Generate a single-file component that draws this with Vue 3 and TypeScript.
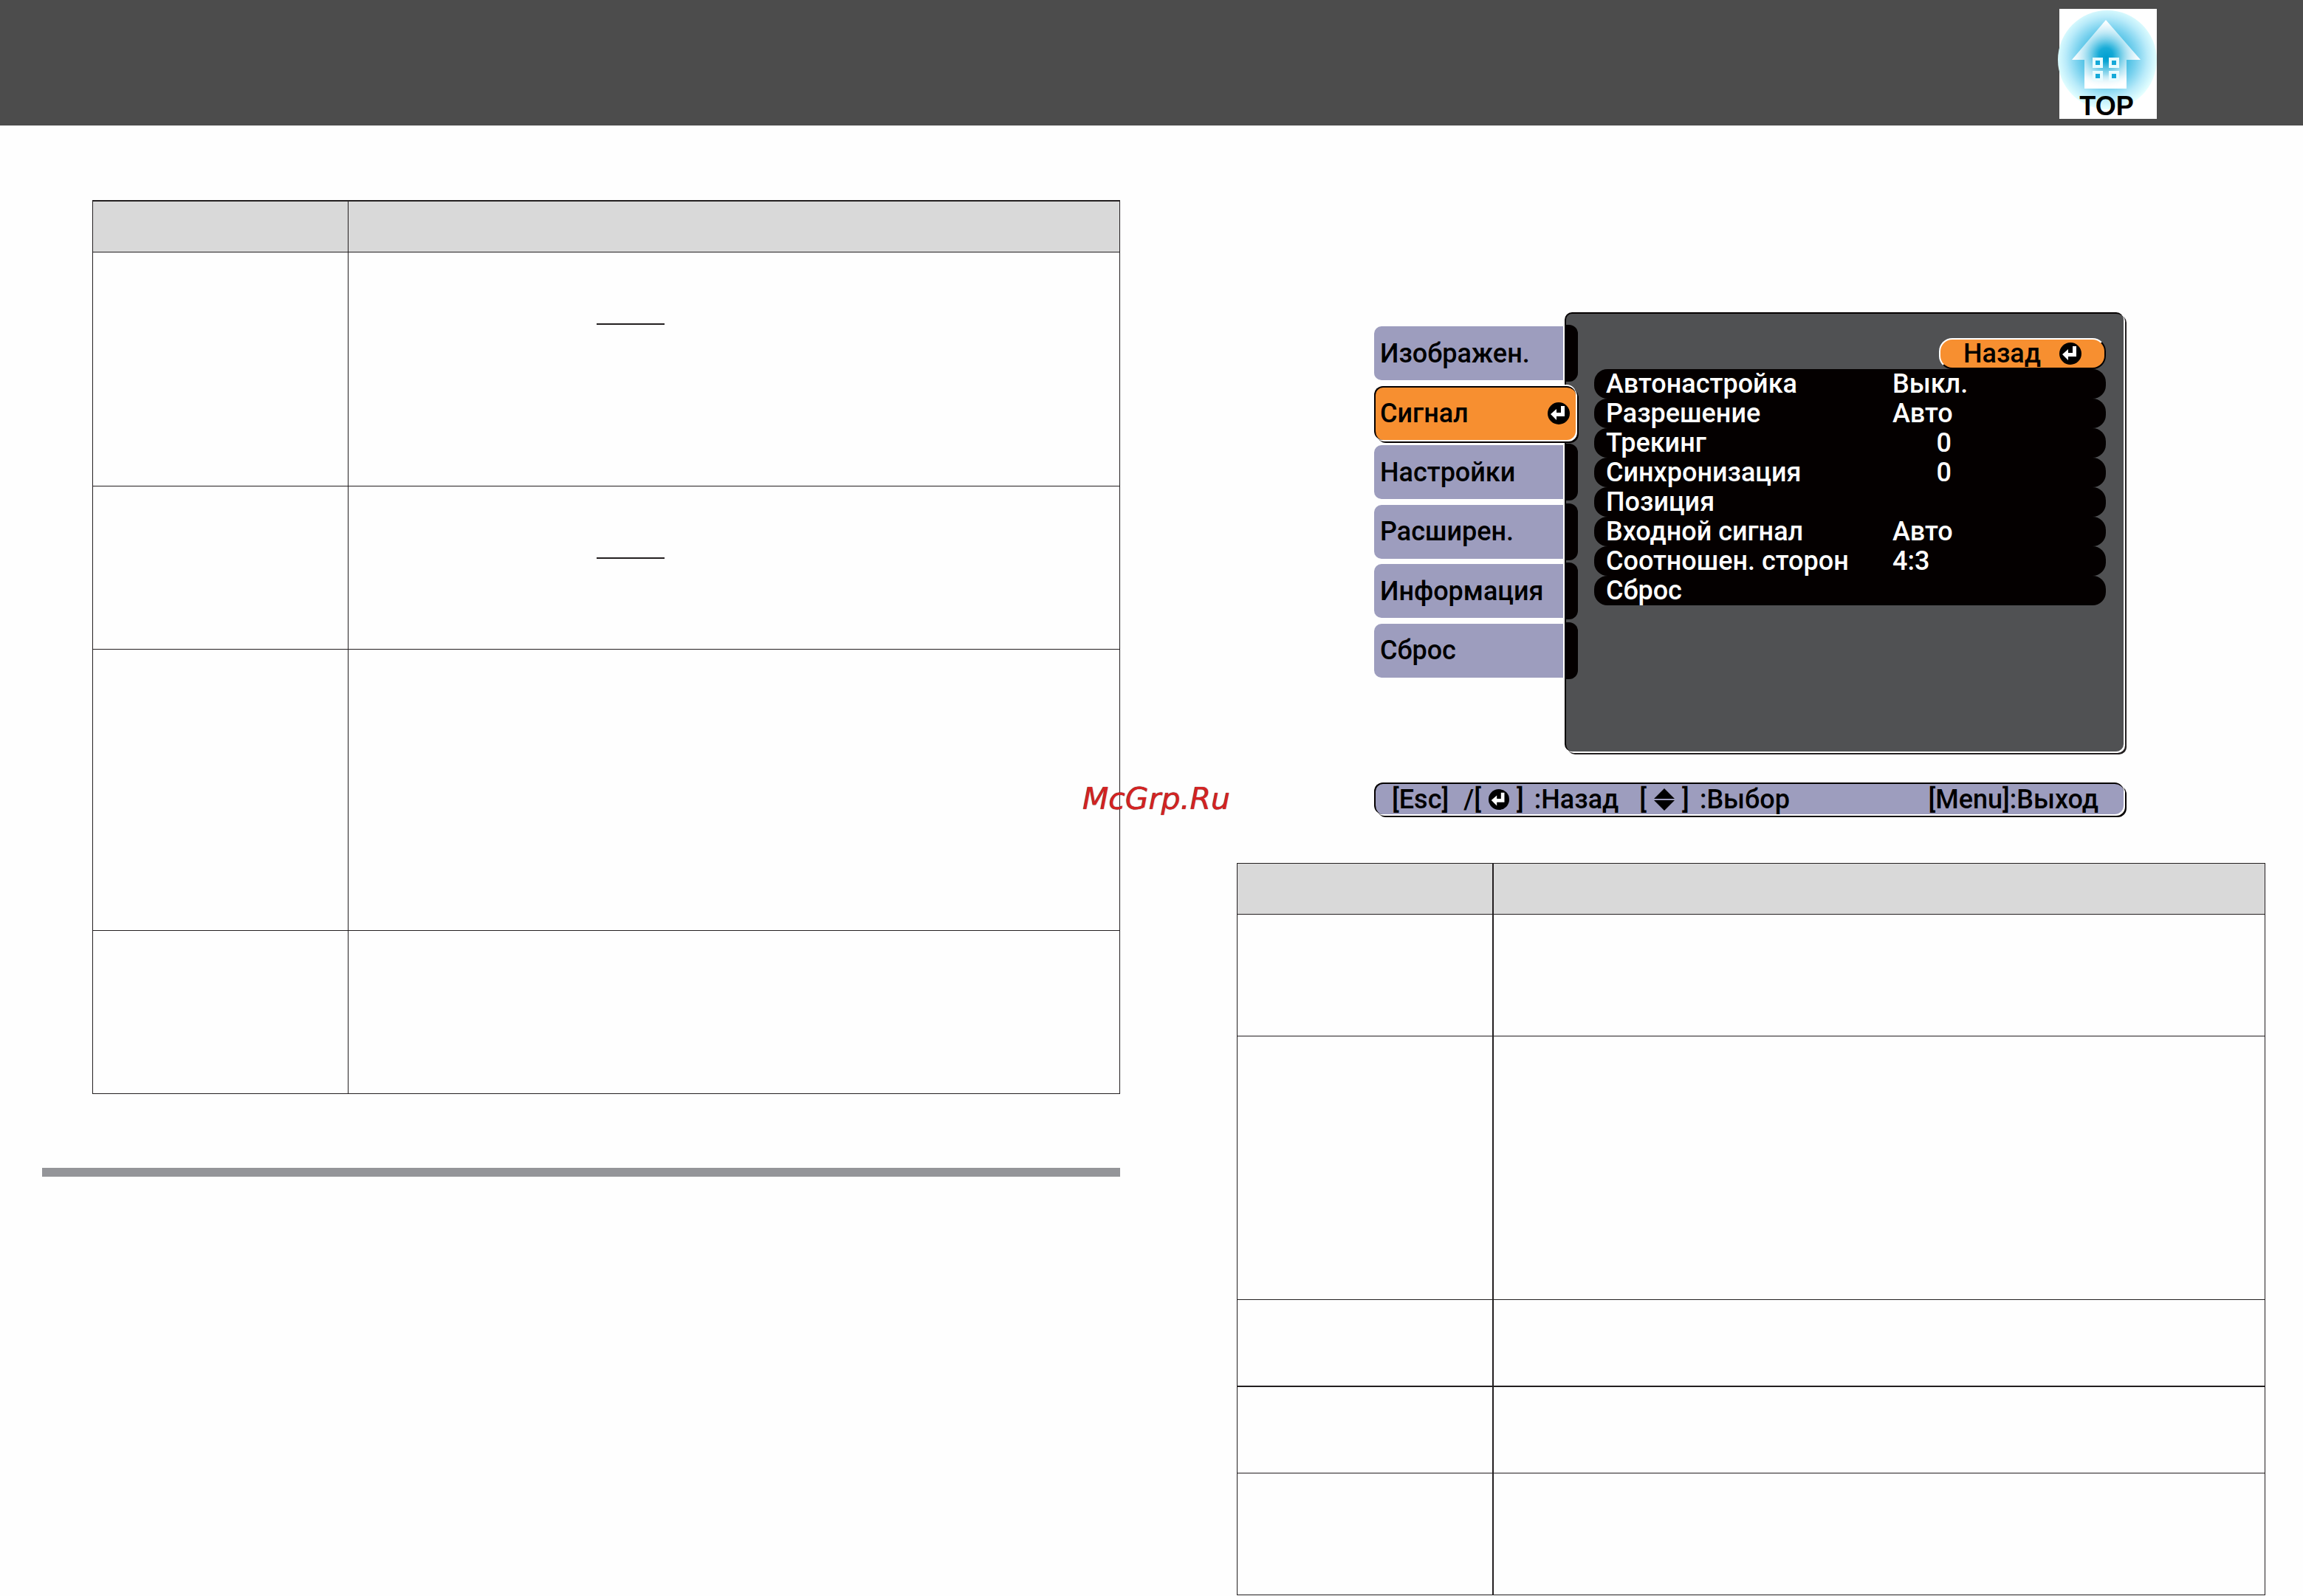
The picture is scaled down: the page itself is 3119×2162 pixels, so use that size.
<script setup lang="ts">
import { ref } from 'vue'

interface Row {
  height: number
  blank?: boolean
  strong?: boolean
}

interface MenuItem {
  label: string
  value?: string
  numeric?: boolean
}

const imageRows: Row[] = [
  { height: 317, blank: true },
  { height: 221, blank: true },
  { height: 381 },
  { height: 221 },
]

const signalRows: Row[] = [
  { height: 165 },
  { height: 357 },
  { height: 118, strong: true },
  { height: 117 },
  { height: 165 },
]

const tabs: string[] = ['Изображен.', 'Сигнал', 'Настройки', 'Расширен.', 'Информация', 'Сброс']
const activeTab = ref('Сигнал')

const items: MenuItem[] = [
  { label: 'Автонастройка', value: 'Выкл.' },
  { label: 'Разрешение', value: 'Авто' },
  { label: 'Трекинг', value: '0', numeric: true },
  { label: 'Синхронизация', value: '0', numeric: true },
  { label: 'Позиция' },
  { label: 'Входной сигнал', value: 'Авто' },
  { label: 'Соотношен. сторон', value: '4:3' },
  { label: 'Сброс' },
]
</script>

<template>
  <div class="page">
    <header class="banner">
      <a class="top-link" href="#">
        <svg viewBox="0 0 136 149" width="136" height="149">
          <defs>
            <radialGradient id="disc" gradientUnits="userSpaceOnUse" cx="66" cy="66" r="69">
              <stop offset="0" stop-color="#009fd0" />
              <stop offset="0.25" stop-color="#22b0da" />
              <stop offset="0.58" stop-color="#78d1ee" />
              <stop offset="0.8" stop-color="#b9ebfa" />
              <stop offset="1" stop-color="#e4ffff" />
            </radialGradient>
            <radialGradient id="house" gradientUnits="userSpaceOnUse" cx="65" cy="62" r="46">
              <stop offset="0.2" stop-color="#fff" stop-opacity="0" />
              <stop offset="0.65" stop-color="#fff" stop-opacity="0.6" />
              <stop offset="1" stop-color="#fff" />
            </radialGradient>
            <linearGradient id="foot" x1="0" y1="0" x2="0" y2="1">
              <stop offset="0.5" stop-color="#fff" stop-opacity="0" />
              <stop offset="1" stop-color="#fff" stop-opacity="0.9" />
            </linearGradient>
          </defs>
          <rect x="2" y="0" width="132" height="149" fill="#fff" />
          <circle cx="67" cy="69" r="67" fill="url(#disc)" />
          <path d="M65 15 112 69H93V108H36V69H19Z" fill="url(#house)" />
          <path d="M36 69H93V108H36Z" fill="url(#foot)" />
          <g fill="#15a9d8" stroke="#e8fbff" stroke-width="4">
            <rect x="49" y="68" width="10" height="10" />
            <rect x="71" y="68" width="10" height="10" />
            <rect x="49" y="86" width="10" height="10" />
            <rect x="71" y="86" width="10" height="10" />
          </g>
          <text x="66" y="144" text-anchor="middle" class="top-text">TOP</text>
        </svg>
      </a>
    </header>

    <main class="columns">
      <section class="column">
        <table class="grid grid-image">
          <thead>
            <tr>
              <th class="name"></th>
              <th></th>
            </tr>
          </thead>
          <tbody>
            <tr v-for="(row, i) in imageRows" :key="i" :style="{ height: row.height + 'px' }">
              <td></td>
              <td><span v-if="row.blank" class="blank"></span></td>
            </tr>
          </tbody>
        </table>
        <hr class="rule" />
      </section>

      <section class="column">
        <div class="osd">
          <div class="screen">
            <nav class="tabs">
              <button
                v-for="tab in tabs"
                :key="tab"
                type="button"
                class="tab"
                :class="{ active: tab === activeTab }"
                @click="activeTab = tab"
              >
                {{ tab }}
                <svg v-if="tab === activeTab" class="enter" viewBox="0 0 30 30">
                  <circle cx="15" cy="15" r="15" />
                  <path d="M4 16 12 9V14H18V5H23V19H12V24Z" />
                </svg>
              </button>
            </nav>
            <div class="panel">
              <button type="button" class="back">
                Назад
                <svg class="enter" viewBox="0 0 30 30">
                  <circle cx="15" cy="15" r="15" />
                  <path d="M4 16 12 9V14H18V5H23V19H12V24Z" />
                </svg>
              </button>
              <button v-for="item in items" :key="item.label" type="button" class="item">
                <span class="label">{{ item.label }}</span>
                <span class="value" :class="{ numeric: item.numeric }">{{ item.value }}</span>
              </button>
            </div>
          </div>
          <div class="hints">
            <span class="hint-esc">[Esc]</span>
            <span>/[</span>
            <svg class="enter" viewBox="0 0 30 30">
              <circle cx="15" cy="15" r="15" />
              <path d="M4 16 12 9V14H18V5H23V19H12V24Z" />
            </svg>
            <span>]</span>
            <span class="hint-back">:Назад</span>
            <span>[</span>
            <svg class="updown" viewBox="0 0 28 30">
              <path d="M14 0 28 14H0ZM0 16H28L14 30Z" />
            </svg>
            <span>]</span>
            <span class="hint-select">:Выбор</span>
            <span class="hint-exit">[Menu]:Выход</span>
          </div>
        </div>

        <table class="grid grid-signal">
          <thead>
            <tr>
              <th class="name"></th>
              <th></th>
            </tr>
          </thead>
          <tbody>
            <tr
              v-for="(row, i) in signalRows"
              :key="i"
              :class="{ strong: row.strong }"
              :style="{ height: row.height + 'px' }"
            >
              <td></td>
              <td></td>
            </tr>
          </tbody>
        </table>
      </section>
    </main>

    <div class="watermark">McGrp.Ru</div>
  </div>
</template>

<style>
body {
  margin: 0;
  background: #fefefe;
}
</style>

<style scoped>
.page {
  position: relative;
  min-height: 100vh;
  font-family: Roboto, sans-serif;
}

.banner {
  display: flex;
  justify-content: flex-end;
  box-sizing: border-box;
  height: 170px;
  padding: 12px 196px 0 0;
  background: #4c4c4c;
}

.top-link {
  height: 149px;
}

.top-link svg {
  display: block;
  overflow: visible;
}

.top-text {
  font: bold 36px 'Liberation Sans', sans-serif;
  fill: #000;
}

.columns {
  display: grid;
  grid-template-columns: 1fr 1fr;
  gap: 91px;
  padding: 0 51px 0 57px;
}

.grid {
  box-sizing: border-box;
  table-layout: fixed;
  border-collapse: separate;
  border-spacing: 0;
  border: solid #231f20;
  border-width: 1px 0 0 1px;
}

.grid-image {
  width: calc(100% - 68px);
  margin: 101px 0 0 68px;
  border-top-width: 2px;
}

.grid-signal {
  width: calc(100% - 67px);
  margin-left: 67px;
}

.grid th,
.grid td {
  box-sizing: border-box;
  padding: 0;
  vertical-align: top;
  border: solid #231f20;
  border-width: 0 1px 1px 0;
}

.grid thead tr {
  height: 69px;
  background: #d9d9d9;
}

.grid .name {
  width: 346px;
}

.grid-signal .name {
  width: 347px;
}

.grid-signal th:first-child,
.grid-signal td:first-child {
  border-right-width: 2px;
}

.grid .strong td {
  border-bottom-width: 2px;
}

.blank {
  display: block;
  width: 92px;
  height: 96px;
  margin-left: 336px;
  border-bottom: 2px solid #231f20;
}

.rule {
  height: 12px;
  margin: 100px 0 0;
  border: 0;
  background: #949599;
}

.osd {
  max-width: 1019px;
  margin: 253px 188px 66px 253px;
  font-size: 36px;
  font-weight: 500;
  line-height: 40px;
}

button {
  font: inherit;
  color: #000;
  text-align: left;
}

.screen {
  display: flex;
  align-items: flex-start;
  margin-right: 4px;
}

.tabs {
  flex: none;
  display: flex;
  flex-direction: column;
  justify-content: space-between;
  box-sizing: border-box;
  width: 258px;
  height: 495px;
  padding-top: 19px;
  z-index: 1;
}

.tab {
  position: relative;
  display: flex;
  align-items: center;
  justify-content: space-between;
  box-sizing: border-box;
  width: 256px;
  height: 73px;
  padding: 0 8px;
  border: 0;
  border-radius: 10px 0 0 10px;
  background: #9d9dbe;
}

.tab::after {
  content: '';
  position: absolute;
  left: 258px;
  top: -2px;
  width: 18px;
  height: 77px;
  border-radius: 0 12px 12px 0;
  background: #040000;
}

.tab.active {
  width: 273px;
  border: solid #040000;
  border-width: 2px 0 0 2px;
  border-radius: 12px;
  padding: 0 8px 0 6px;
  background: #f78f30;
  box-shadow: 0 -2px 0 #fff, 2px 2px 0 #fff, 4px 4px 0 #040000;
}

.tab.active::after {
  content: none;
}

.enter {
  flex: none;
  width: 30px;
  height: 30px;
}

.enter path {
  fill: #fff;
}

.panel {
  flex: 1;
  min-width: 0;
  display: flex;
  flex-direction: column;
  box-sizing: border-box;
  height: 595px;
  padding: 33px 24px 0 38px;
  border: solid #040000;
  border-width: 2px 0 0 2px;
  border-radius: 10px;
  background: #505153;
  box-shadow: 2px 2px 0 #fff, 4px 4px 0 #231f20;
}

.back {
  display: flex;
  align-items: center;
  justify-content: space-between;
  align-self: flex-end;
  box-sizing: border-box;
  width: 226px;
  height: 42px;
  padding: 0 31px;
  border: 2px solid;
  border-color: #fff #040000 #040000 #fff;
  border-radius: 18px;
  background: #f78f30;
}

.item {
  display: flex;
  height: 40px;
  padding: 0 16px;
  border: 0;
  border-radius: 18px;
  background: #040000;
  color: #fff;
}

.label {
  width: 388px;
}

.numeric {
  width: 80px;
  text-align: right;
}

.hints {
  display: flex;
  align-items: center;
  box-sizing: border-box;
  height: 43px;
  margin: 42px 4px 0 0;
  padding: 0 34px 0 22px;
  border: solid #040000;
  border-width: 2px 0 0 2px;
  border-radius: 12px;
  background: #9d9dbe;
  box-shadow: 2px 2px 0 #fff, 4px 4px 0 #040000;
  white-space: nowrap;
}

.hints .enter,
.updown {
  width: 28px;
  height: 30px;
  margin: 0 10px;
}

.hint-esc {
  margin-right: 20px;
}

.hint-back,
.hint-select {
  margin-left: 14px;
}

.hint-back {
  margin-right: 28px;
}

.hint-exit {
  margin-left: auto;
}

.watermark {
  position: absolute;
  left: 47%;
  top: 50%;
  transform: translateY(-50%);
  padding-top: 2px;
  font: italic 41px/48px 'DejaVu Sans', sans-serif;
  color: #d42222;
  text-shadow: 0 0 1px #401010;
}
</style>
